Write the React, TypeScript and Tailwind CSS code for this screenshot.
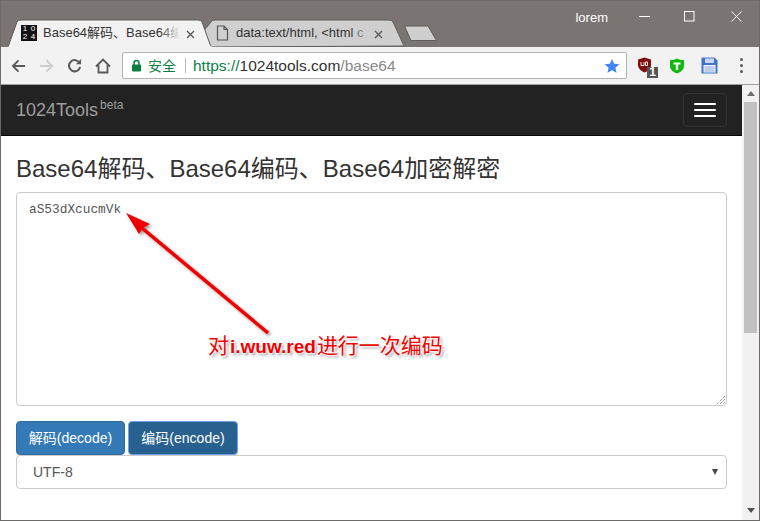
import React from "react";

const sans = "font-['Liberation_Sans','Noto_Sans_CJK_SC',sans-serif]";

function Favicon() {
  return (
    <span className="grid h-4 w-4 shrink-0 grid-cols-2 bg-[#111] text-center font-['Liberation_Sans',sans-serif] text-[8px] leading-[8px] text-white">
      <span>1</span><span>0</span><span>2</span><span>4</span>
    </span>
  );
}

function Tabs() {
  return (
    <div className="flex h-[28px] items-end pl-[7px]">
      <div className="relative z-10 flex h-[28px] w-[204px] items-center pl-[13px] pr-[19px]">
        <svg className="absolute inset-0" width="204" height="28" viewBox="0 0 204 28">
          <path d="M0 28 L9 3 Q10 1 13 1 L190 1 Q193 1 194 3 L203 28 Z" fill="#f2f2f2" stroke="#5f5c5b" strokeWidth="1" />
          <rect x="0.5" y="27" width="203" height="1" fill="#f2f2f2" />
        </svg>
        <span className="relative mr-[6px]"><Favicon /></span>
        <span className="relative w-[136px] overflow-hidden whitespace-nowrap text-[13px] leading-[16px] text-[#333]">Base64解码、Base64编码</span>
        <svg className="absolute left-[178px] top-[11px]" width="9" height="9" viewBox="0 0 9 9"><path d="M1 1 L8 8 M8 1 L1 8" stroke="#5a5a5a" strokeWidth="1.4" /></svg>
        <span className="absolute left-[152px] top-[4px] h-[20px] w-[20px] bg-gradient-to-r from-transparent to-[#f2f2f2]" />
      </div>
      <div className="relative -ml-[10px] flex h-[28px] w-[204px] items-center pl-[14px]">
        <svg className="absolute inset-0" width="204" height="28" viewBox="0 0 204 28">
          <path d="M8 28 L0 14 L9 3 Q10 1 13 1 L187 1 Q190 1 191 3 L202 27 Z" fill="#cfcfcf" stroke="#5f5c5b" strokeWidth="1" />
        </svg>
        <svg className="relative mr-[7px] shrink-0" width="13" height="16" viewBox="0 0 13 16"><path d="M1.5 1 H8 L11.5 4.5 V15 H1.5 Z M8 1 V4.5 H11.5" fill="none" stroke="#555" strokeWidth="1.2" /></svg>
        <span className="relative w-[132px] overflow-hidden whitespace-nowrap text-[13px] leading-[16px] text-[#333]">data:text/html, &lt;html c</span>
        <span className="absolute left-[148px] top-[4px] h-[20px] w-[20px] bg-gradient-to-r from-transparent to-[#cfcfcf]" />
        <svg className="absolute left-[172px] top-[11px]" width="9" height="9" viewBox="0 0 9 9"><path d="M1 1 L8 8 M8 1 L1 8" stroke="#5a5a5a" strokeWidth="1.4" /></svg>
      </div>
      <svg className="mb-[5px] -ml-[3px]" width="35" height="17" viewBox="0 0 35 17"><path d="M1.5 1 H25 L33.5 15.5 H8 Z" fill="#cfcfcf" stroke="#5f5c5b" strokeLinejoin="round" /></svg>
    </div>
  );
}

function WindowControls() {
  return (
    <div className="flex items-center">
      <span className="mr-[31px] text-[13px] leading-[16px] text-white">lorem</span>
      <svg className="mb-[4px] mr-[34px]" width="11" height="11" viewBox="0 0 11 11"><path d="M0 5.5 H11" stroke="#fff" /></svg>
      <svg className="mb-[4px] mr-[36px]" width="11" height="11" viewBox="0 0 11 11"><rect x="0.5" y="0.5" width="9.5" height="9.5" fill="none" stroke="#fff" /></svg>
      <svg className="mb-[4px] mr-[17px]" width="11" height="11" viewBox="0 0 11 11"><path d="M0.5 0.5 L10.5 10.5 M10.5 0.5 L0.5 10.5" stroke="#fff" /></svg>
    </div>
  );
}

function Toolbar() {
  return (
    <div className="flex h-[37px] items-center bg-[#f2f2f2]">
      <svg className="ml-[10px]" width="15" height="16" viewBox="0 0 16 16"><path d="M15 8 H2 M8 2 L2 8 L8 14" fill="none" stroke="#5a5a5a" strokeWidth="2" /></svg>
      <svg className="ml-[13px]" width="15" height="16" viewBox="0 0 16 16"><path d="M1 8 H14 M8 2 L14 8 L8 14" fill="none" stroke="#cdcdcd" strokeWidth="2" /></svg>
      <svg className="ml-[13px]" width="15" height="16" viewBox="0 0 16 16"><path d="M13.5 5 A6 6 0 1 0 14 9" fill="none" stroke="#5a5a5a" strokeWidth="2.2" /><path d="M9.5 6 H15 V0.5 Z" fill="#5a5a5a" /></svg>
      <svg className="ml-[13px]" width="16" height="16" viewBox="0 0 16 16"><path d="M1 8.5 L8 1.5 L15 8.5 M3.5 7 V14.5 H12.5 V7" fill="none" stroke="#5a5a5a" strokeWidth="1.8" /></svg>
      <div className="ml-[11px] flex h-[27px] w-[505px] items-center rounded-[2px] border border-[#b4b4b4] bg-white pl-[8px] pr-[6px]">
        <svg width="11" height="13" viewBox="0 0 11 13"><path d="M3 6 V4 A2.5 2.5 0 0 1 8 4 V6" fill="none" stroke="#0b8043" strokeWidth="1.5" /><rect x="1" y="5.5" width="9" height="7" rx="1" fill="#0b8043" /></svg>
        <span className="ml-[6px] text-[14px] leading-[16px] text-[#0b8043]">安全</span>
        <span className="ml-[9px] h-[15px] w-px bg-[#b9b9b9]" />
        <span className="ml-[7px] flex-1 whitespace-nowrap text-[15.5px] leading-[18px] text-[#0b8043]">
          https://<span className="text-[#333]">1024tools.com</span><span className="text-[#888]">/base64</span>
        </span>
        <svg width="16" height="16" viewBox="0 0 24 24"><path d="M12 1.5 L15.2 8.6 L23 9.4 L17.1 14.6 L18.8 22.3 L12 18.3 L5.2 22.3 L6.9 14.6 L1 9.4 L8.8 8.6 Z" fill="#4285f4" /></svg>
      </div>
      <div className="relative ml-[10px] h-[17px] w-[16px]">
        <svg width="15" height="16" viewBox="0 0 15 16"><path d="M7.5 0.5 L14 2.5 V8 C14 12 10 14.5 7.5 15.5 C5 14.5 1 12 1 8 V2.5 Z" fill="#800e0e" /><path d="M4 5 V8.5 H7 M7 5 V8.5 M8.5 5 V8.5 H10.5 V5 H8.5" fill="none" stroke="#fff" strokeWidth="0.9" /></svg>
        <span className={`absolute left-[10px] top-[10px] h-[11px] w-[11px] bg-[#555] text-center text-[12px] font-bold leading-[11px] text-white ${sans}`}>1</span>
      </div>
      <svg className="ml-[16px]" width="16" height="16" viewBox="0 0 16 16"><path d="M8 0.5 C10 2 12 2 15 2 V8 C15 12 11 14.5 8 15.5 C5 14.5 1 12 1 8 V2 C4 2 6 2 8 0.5 Z" fill="#0fb90f" /><path d="M4.5 4.5 H11.5 V6.5 H9.2 V12 H6.8 V6.5 H4.5 Z" fill="#fff" /></svg>
      <svg className="ml-[16px]" width="17" height="17" viewBox="0 0 17 17"><path d="M0.5 0.5 H13.5 L16.5 3.5 V16.5 H0.5 Z" fill="#3f74c9" /><rect x="4" y="1.5" width="9" height="4.5" fill="#c9d8f0" /><rect x="2.5" y="8" width="12" height="7.5" fill="#f3f6fb" /><path d="M3.5 10 H13.5 M3.5 12 H13.5 M3.5 14 H13.5" stroke="#8aa7d8" /></svg>
      <div className="ml-[22px] flex flex-col gap-[3px]">
        <span className="h-[3px] w-[3px] rounded-full bg-[#5a5a5a]" />
        <span className="h-[3px] w-[3px] rounded-full bg-[#5a5a5a]" />
        <span className="h-[3px] w-[3px] rounded-full bg-[#5a5a5a]" />
      </div>
    </div>
  );
}

function Scrollbar() {
  return (
    <div className="flex w-[17px] shrink-0 flex-col items-center bg-[#f1f1f1]">
      <div className="mt-[6px] h-0 w-0 border-x-[4px] border-b-[5px] border-x-transparent border-b-[#6f6f6f]" />
      <div className="mt-[6px] h-[231px] w-[13px] bg-[#c1c1c1]" />
      <div className="mt-auto mb-[7px] h-0 w-0 border-x-[4px] border-t-[5px] border-x-transparent border-t-[#505050]" />
    </div>
  );
}

function Page() {
  return (
    <div className="relative min-w-0 flex-1 overflow-hidden bg-white">
      <div className="flex h-[51px] items-center justify-between border-b border-[#080808] bg-[#222] pl-[15px] pr-[15px]">
        <span className="text-[18px] leading-[20px] text-[#9d9d9d]">
          1024Tools<sup className="relative -top-[7px] ml-[2px] align-baseline text-[12px] leading-none">beta</sup>
        </span>
        <div className="flex h-[34px] w-[44px] flex-col items-center justify-center gap-[4px] rounded-[4px] border border-[#333]">
          <span className="h-[2px] w-[22px] rounded-[1px] bg-white" />
          <span className="h-[2px] w-[22px] rounded-[1px] bg-white" />
          <span className="h-[2px] w-[22px] rounded-[1px] bg-white" />
        </div>
      </div>
      <div className="px-[15px]">
        <h1 className="mt-[20px] mb-[10px] text-[24px] font-normal leading-[26px] text-[#333]">Base64解码、Base64编码、Base64加密解密</h1>
        <div className="relative h-[214px] w-[711px] rounded-[4px] border border-[#ccc] bg-white px-[12px] py-[3px]">
          <span className="font-['Liberation_Mono',monospace] text-[12.8px] leading-[20px] text-[#555]">aS53dXcucmVk</span>
          <svg className="absolute right-[1px] bottom-[1px]" width="9" height="9" viewBox="0 0 9 9"><path d="M9 1 L1 9 M9 4 L4 9 M9 7 L7 9" stroke="#777" strokeWidth="1" strokeDasharray="1 1" /></svg>
        </div>
        <div className="mt-[15px] flex gap-[3px]">
          <button className="h-[34px] w-[109px] rounded-[4px] border border-[#2e6da4] bg-[#337ab7] text-[14px] leading-[20px] text-white">解码(decode)</button>
          <button className="h-[34px] w-[110px] rounded-[4px] border border-[#6fa0e8] bg-[#286090] text-[14px] leading-[20px] text-white">编码(encode)</button>
        </div>
        <div className="relative flex h-[34px] w-[711px] items-center rounded-[4px] border border-[#ccc] bg-white pl-[16px] text-[14px] leading-[20px] text-[#555]">
          UTF-8
          <span className="absolute right-[8px] top-[13px] h-0 w-0 border-x-[3.5px] border-t-[6px] border-x-transparent border-t-[#444]" />
        </div>
      </div>
      <svg className="pointer-events-none absolute left-0 top-0" width="742" height="436" viewBox="0 0 742 436">
        <defs>
          <filter id="s" x="-20%" y="-20%" width="140%" height="140%"><feDropShadow dx="2" dy="2" stdDeviation="1.5" floodColor="#000" floodOpacity="0.4" /></filter>
        </defs>
        <g filter="url(#s)">
          <path d="M267 248 L141 143" stroke="#f00000" strokeWidth="3.5" />
          <path d="M125 128 L149 139 L142 143 L138 149 Z" fill="#f00000" />
        </g>
      </svg>
      <span className="absolute left-[207px] top-[250px] whitespace-nowrap text-[21px] leading-[22px] text-[#f00000] [text-shadow:0_0_2px_#fff,0_0_2px_#fff,0_0_3px_#fff,0_0_3px_#fff,2px_2px_3px_#888]">
        对<b className="mx-px text-[19px] font-bold">i.wuw.red</b>进行一次编码
      </span>
    </div>
  );
}

export default function App() {
  return (
    <div className={`flex h-[521px] w-[760px] flex-col overflow-hidden border border-[#6e6a69] ${sans}`}>
      <div className="flex h-[46px] shrink-0 items-start justify-between bg-[#7a7472]">
        <div className="mt-[18px]"><Tabs /></div>
        <div className="mt-[9px]"><WindowControls /></div>
      </div>
      <Toolbar />
      <div className="h-px shrink-0 bg-[#a0a0a0]" />
      <div className="flex min-h-0 flex-1">
        <Page />
        <Scrollbar />
      </div>
    </div>
  );
}
